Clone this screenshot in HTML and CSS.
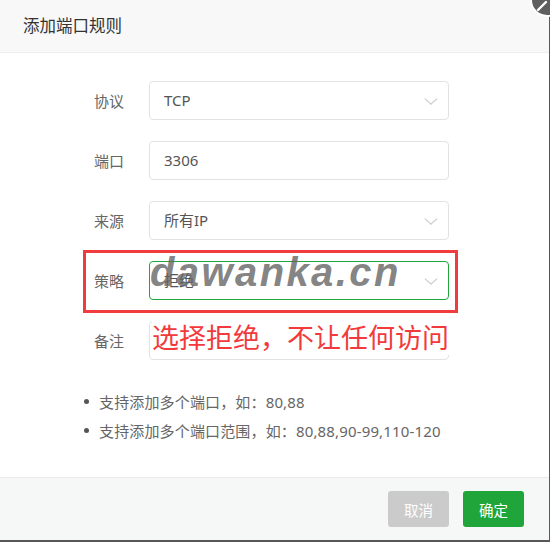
FILE: index.html
```html
<!DOCTYPE html>
<html lang="zh-CN">
<head>
    <meta charset="UTF-8">
    <meta name="viewport" content="width=device-width, initial-scale=1.0">
    <title>添加端口规则</title>
    <link rel="stylesheet" href="styles.css">
</head>
<body>
    <div class="dialog">
        <div class="dialog-header">添加端口规则</div>
        <span class="close-btn">
            <svg width="12" height="12" viewBox="0 0 12 12"><path d="M2 10 L10 2" stroke="#fff" stroke-width="2.4" stroke-linecap="round"/></svg>
        </span>

        <div class="dialog-body">
            <div class="form-row">
                <label>协议</label>
                <div class="field select">TCP</div>
            </div>
            <div class="form-row">
                <label>端口</label>
                <div class="field">3306</div>
            </div>
            <div class="form-row">
                <label>来源</label>
                <div class="field select">所有IP</div>
            </div>
            <div class="form-row">
                <label>策略</label>
                <div class="field select active">拒绝</div>
            </div>
            <div class="form-row">
                <label>备注</label>
                <div class="field"></div>
            </div>

            <ul class="tips">
                <li>支持添加多个端口，如：80,88</li>
                <li>支持添加多个端口范围，如：80,88,90-99,110-120</li>
            </ul>

            <!-- annotation overlays -->
            <div class="mark-box"></div>
            <div class="watermark">dawanka.cn</div>
            <div class="mark-text">选择拒绝，不让任何访问</div>
        </div>

        <div class="dialog-footer">
            <button class="btn btn-cancel">取消</button>
            <button class="btn btn-ok">确定</button>
        </div>
    </div>
</body>
</html>
```

FILE: styles.css
```css
* {
    box-sizing: border-box;
    margin: 0;
    padding: 0;
}

body {
    font-family: "Noto Sans", "Noto Sans CJK SC", sans-serif;
    background-color: #585858;
    width: 550px;
    height: 542px;
    overflow: hidden;
}

.dialog {
    position: relative;
    width: 549px;
    height: 540px;
    background: #fff;
    display: flex;
    flex-direction: column;
}

.dialog-header {
    height: 53px;
    padding-left: 23px;
    line-height: 52px;
    font-size: 16.5px;
    color: #333;
    background-color: #f8f8f8;
    border-bottom: 1px solid #eee;
}

.close-btn {
    position: absolute;
    top: -17px;
    right: -15px;
    width: 34px;
    height: 34px;
    border-radius: 50%;
    background: #5f5f5f;
    border: 2px solid #fff;
    display: flex;
    align-items: flex-end;
    justify-content: flex-start;
    padding: 0 0 3px 4px;
}

.dialog-body {
    position: relative;
    flex: 1;
    padding: 28px 0 0 94px;
}

.form-row {
    display: flex;
    align-items: center;
    height: 39px;
    margin-bottom: 21px;
}

.form-row label {
    width: 55px;
    font-size: 15px;
    color: #666;
}

.field {
    position: relative;
    width: 300px;
    height: 39px;
    padding-left: 14px;
    line-height: 37px;
    font-size: 15px;
    color: #555;
    border: 1px solid #e2e2e2;
    border-radius: 4px;
}

.field.active {
    border-color: #20a53a;
}

.select::after {
    content: "";
    position: absolute;
    right: 13px;
    top: 13px;
    width: 7px;
    height: 7px;
    border-right: 1px solid #c8cbd0;
    border-bottom: 1px solid #c8cbd0;
    transform: scaleX(1.15) rotate(45deg);
}

.tips {
    list-style: none;
    margin: 27px 0 0 -10px;
}

.tips li {
    display: flex;
    align-items: center;
    height: 29px;
    font-size: 15px;
    letter-spacing: 0.15px;
    color: #666;
}

.tips li::before {
    content: "";
    width: 5px;
    height: 5px;
    border-radius: 50%;
    background: #555;
    margin: 0 10px 0 0;
}

.mark-box {
    position: absolute;
    left: 83px;
    top: 197px;
    width: 375px;
    height: 63px;
    border: 3px solid #f03c3c;
}

.watermark {
    position: absolute;
    left: 150px;
    top: 197px;
    font-family: "Liberation Sans", sans-serif;
    font-style: italic;
    font-weight: bold;
    font-size: 40px;
    letter-spacing: 2.4px;
    color: rgba(100, 100, 100, 0.8);
}

.mark-text {
    position: absolute;
    left: 152px;
    top: 266px;
    font-family: "Noto Sans CJK SC", sans-serif;
    font-size: 27px;
    color: #f23a3c;
    background: #fff;
    line-height: 36px;
}

.dialog-footer {
    height: 63px;
    display: flex;
    justify-content: flex-end;
    gap: 14px;
    padding: 13px 25px 0 0;
    background-color: #f6f7f7;
    border-top: 1px solid #eaeaea;
}

.btn {
    width: 61px;
    height: 36px;
    border: 0;
    border-radius: 3px;
    color: #fff;
    font-family: "Noto Sans CJK SC", sans-serif;
    font-size: 14.5px;
}

.btn-cancel {
    background-color: #cbcbcb;
}

.btn-ok {
    background-color: #20a53a;
}
```
